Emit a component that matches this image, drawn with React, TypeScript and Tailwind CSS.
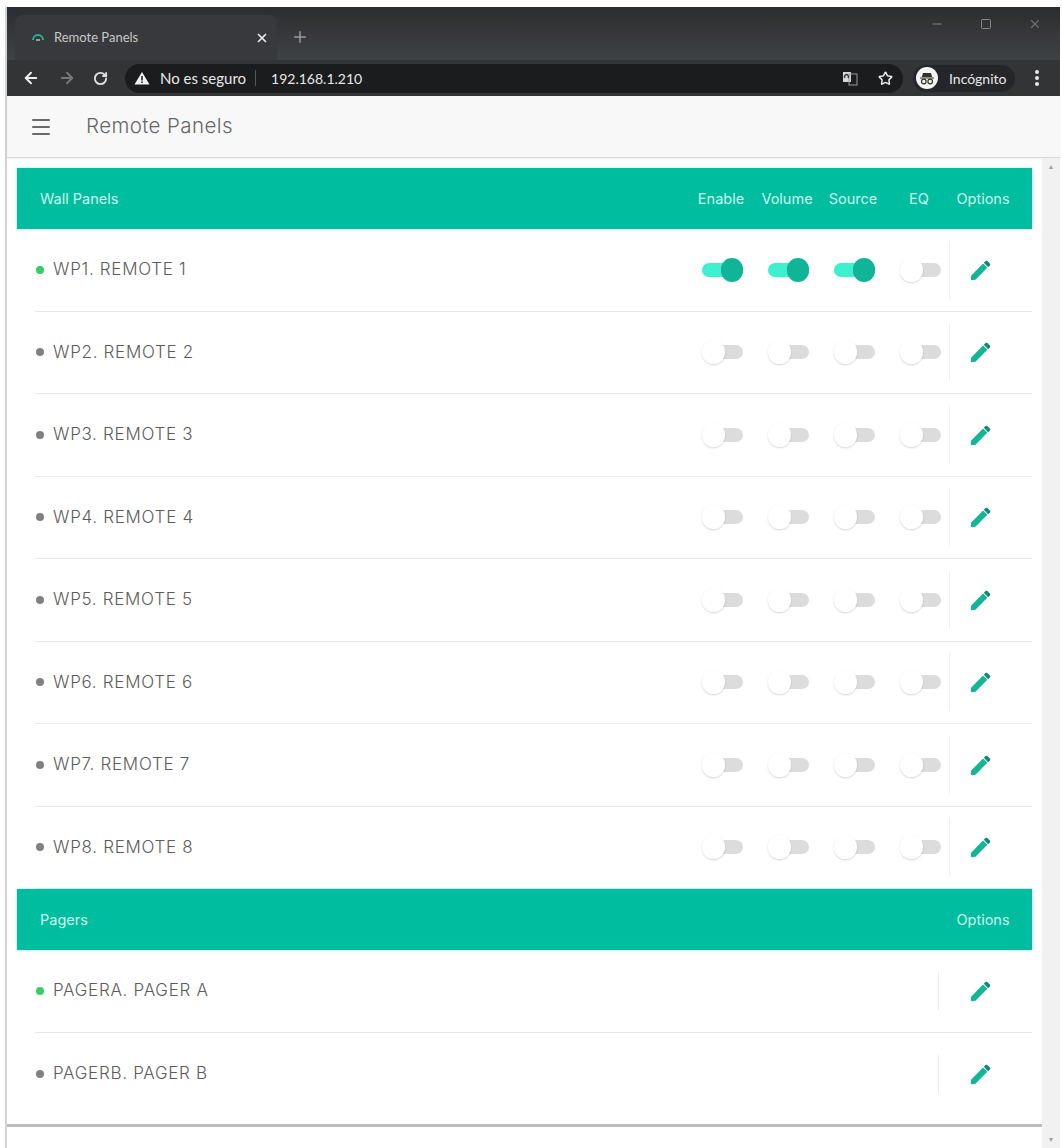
import React from "react";
import { ArrowLeft, ArrowRight, RotateCw, Star, Plus, X, Menu, Minus, Square } from "lucide-react";

const Pencil = () => (
  <svg width="26" height="26" viewBox="0 0 24 24" className="block">
    <path d="M2.8 17.2 2.6 20.6c0 .5.3.9.9.8l3.4-.3L17.8 10l-3.9-3.9L2.8 17.2z" fill="#12b594" />
    <path d="M14.6 5.4l4 4 1.6-1.6c.5-.5.5-1.2 0-1.7l-2.3-2.3c-.5-.5-1.2-.5-1.7 0l-1.6 1.6z" fill="#138a75" />
  </svg>
);

const Toggle = ({ on }: { on: boolean }) => (
  <div className="relative w-[41px] h-[24px] flex items-center justify-end">
    {on ? (
      <div className="w-full h-[14px] rounded-full bg-[#3df0cf]" />
    ) : (
      <div className="w-[32px] h-[14px] rounded-full bg-[#dcdcdc]" />
    )}
    {on ? (
      <div className="absolute right-0 top-0 w-[22px] h-[24px] rounded-full bg-[#0fb596]" />
    ) : (
      <div className="absolute left-0 top-0 w-[23px] h-[24px] rounded-full bg-white shadow-[0_1px_2px_rgba(0,0,0,0.16)]" />
    )}
  </div>
);

const Row = ({ label, active, toggles }: { label: string; active: boolean; toggles?: boolean[] }) => (
  <div className="h-[82.5px] ml-[18px] flex items-center border-b border-[#e8e8e8] last:border-b-0">
    <span className={`w-[8px] h-[8px] rounded-full ml-[1px] ${active ? "bg-[#34cf63]" : "bg-[#808080]"}`} />
    <span className="ml-[9px] text-[17px] tracking-[0.7px] text-[#5c5c5c] flex-1 whitespace-nowrap font-['Inter',sans-serif] font-light">{label}</span>
    {toggles ? (
      <div className="flex h-[58px] items-center mr-[20px]">
        {toggles.map((t, i) => (
          <div key={i} className="w-[66px] flex justify-center">
            <Toggle on={t} />
          </div>
        ))}
        <div className="w-[1px] h-[58px] bg-[#efefef] ml-[-4px]" />
        <div className="w-[62px] flex justify-center">
          <Pencil />
        </div>
      </div>
    ) : (
      <div className="flex h-[38px] items-center mr-[21px]">
        <div className="w-[1px] h-[38px] bg-[#ececec]" />
        <div className="w-[72px] pl-[12px] flex justify-center">
          <Pencil />
        </div>
      </div>
    )}
  </div>
);

const Head = ({ title, cols }: { title: string; cols: string[] }) => (
  <div className="h-[61px] bg-[#00bd9f] flex items-center pl-[23px] pr-[18px] text-[14.5px] text-[#c9f7ee] font-['Inter',sans-serif] shadow-[0_0_2px_#7feee0]">
    <span className="flex-1">{title}</span>
    {cols.map((c) => (
      <span key={c} className="w-[66px] text-center">{c}</span>
    ))}
    <span className="w-[62px] text-center">Options</span>
  </div>
);

const wall = [1, 2, 3, 4, 5, 6, 7, 8];

export default function App() {
  return (
    <div className="w-[1062px] h-[1148px] overflow-hidden bg-white pt-[7px] pl-[5px] pr-[2px] font-['Lato','Liberation_Sans',sans-serif]">
      <div className="h-[1141px] flex flex-col bg-white border-l-2 border-[#d4d4d4]">
        {/* Tab strip */}
        <div className="h-[53px] shrink-0 flex items-end bg-gradient-to-b from-[#2c2d2f] to-[#3f4245] pl-[8px]">
          <div className="w-[262px] h-[45px] bg-[#37393c] rounded-t-lg flex items-center pl-[16px] pr-[8px] text-[#c8c8c8] text-[13px]">
            <svg width="14" height="10" viewBox="0 0 14 10" fill="none" className="mr-[9px]">
              <path d="M2 7a5 5 0 0 1 10 0" stroke="#23b392" strokeWidth="2" />
              <path d="M5 7h4" stroke="#bbb" strokeWidth="1.5" />
            </svg>
            <span className="flex-1">Remote Panels</span>
            <X size={14} strokeWidth={3} className="text-[#e8e8e8]" />
          </div>
          <Plus size={18} className="text-[#9a9a9a] ml-[14px] mb-[14px]" />
          <div className="ml-auto mr-[18px] mb-[29px] flex items-center gap-[36px] text-[#858789]">
            <Minus size={14} />
            <Square size={12} />
            <X size={14} className="text-[#6d6f71]" />
          </div>
        </div>
        {/* Toolbar */}
        <div className="h-[36px] shrink-0 bg-[#333436] flex items-center pl-[15px] pr-[21px]">
          <ArrowLeft size={18} strokeWidth={2.5} className="text-[#f0f0f0]" />
          <ArrowRight size={18} strokeWidth={2.5} className="text-[#777] ml-[18px]" />
          <RotateCw size={15} strokeWidth={3} className="text-[#e0e0e0] ml-[17px]" />
          <div className="ml-[17px] h-[29px] w-[778px] shrink-0 rounded-full bg-[#1b1c1e] flex items-center pl-[9px] pr-[10px] text-[#e8e8e8]">
            <svg width="16" height="14" viewBox="0 0 16 14">
              <path d="M8 1 15.5 13.5H.5z" fill="#f2f2f2" />
              <path d="M7.2 5h1.6v4.6H7.2zM7.2 10.4h1.6V12H7.2z" fill="#222" />
            </svg>
            <span className="ml-[10px] text-[15px]">No es seguro</span>
            <span className="w-[1px] h-[16px] bg-[#555] ml-[9px] mr-[15px]" />
            <span className="text-[14px]">192.168.1.210</span>
            <svg width="16" height="16" viewBox="0 0 16 16" className="ml-auto">
              <rect x="1" y="2" width="8" height="10" fill="#d8d8d8" />
              <rect x="7" y="4" width="8" height="11" fill="none" stroke="#9a9a9a" />
              <path d="M3 8a2 2 0 1 1 3 0" stroke="#333" strokeWidth="1.4" fill="none" />
            </svg>
            <Star size={15} strokeWidth={2.4} className="ml-[20px] text-[#e8e8e8]" />
          </div>
          <div className="ml-[10px] h-[27px] w-[102px] rounded-full bg-[#24262a] flex items-center pl-[3px] text-[14px] text-[#e8e8e8] shrink-0">
            <svg width="22" height="22" viewBox="0 0 22 22">
              <circle cx="11" cy="11" r="11" fill="#f5f5f5" />
              <path d="M4 10.5h14v1H4zM7 6h8l1.2 4H5.8z" fill="#333" />
              <circle cx="7.8" cy="14.5" r="2.3" fill="none" stroke="#333" strokeWidth="1.2" />
              <circle cx="14.2" cy="14.5" r="2.3" fill="none" stroke="#333" strokeWidth="1.2" />
            </svg>
            <span className="ml-[11px]">Incógnito</span>
          </div>
          <div className="ml-auto flex flex-col gap-[2px]">
            <span className="w-[4px] h-[4px] rounded-full bg-[#e8e8e8]" />
            <span className="w-[4px] h-[4px] rounded-full bg-[#e8e8e8]" />
            <span className="w-[4px] h-[4px] rounded-full bg-[#e8e8e8]" />
          </div>
        </div>
        {/* App bar */}
        <div className="h-[62px] shrink-0 bg-[#f8f8f8] border-b border-[#d8d8d8] flex items-center pl-[22px] text-[#6a6a6a] shadow-[0_1px_2px_rgba(0,0,0,0.06)]">
          <Menu size={24} strokeWidth={2} />
          <span className="ml-[33px] text-[20.5px] tracking-[0.4px] font-['Inter',sans-serif] font-light text-[#666]">Remote Panels</span>
        </div>
        {/* Body */}
        <div className="flex-1 flex min-h-0">
          <div className="flex-1 min-w-0 flex flex-col">
            <div className="h-[969px] shrink-0 pt-[10px] pl-[10px] pr-[10px] border-b-[3px] border-[#bdbdbd]">
              <Head title="Wall Panels" cols={["Enable", "Volume", "Source", "EQ"]} />
              {wall.map((n) => (
                <Row key={n} label={`WP${n}. REMOTE ${n}`} active={n === 1} toggles={n === 1 ? [true, true, true, false] : [false, false, false, false]} />
              ))}
              <Head title="Pagers" cols={[]} />
              <Row label="PAGERA. PAGER A" active />
              <Row label="PAGERB. PAGER B" active={false} />
            </div>
          </div>
          {/* Scrollbar */}
          <div className="w-[18px] shrink-0 bg-[#f1f1f1] flex flex-col items-center justify-between py-[5px] text-[#a3a3a3] text-[7px] leading-none">
            <span>▲</span>
            <span>▼</span>
          </div>
        </div>
      </div>
    </div>
  );
}
